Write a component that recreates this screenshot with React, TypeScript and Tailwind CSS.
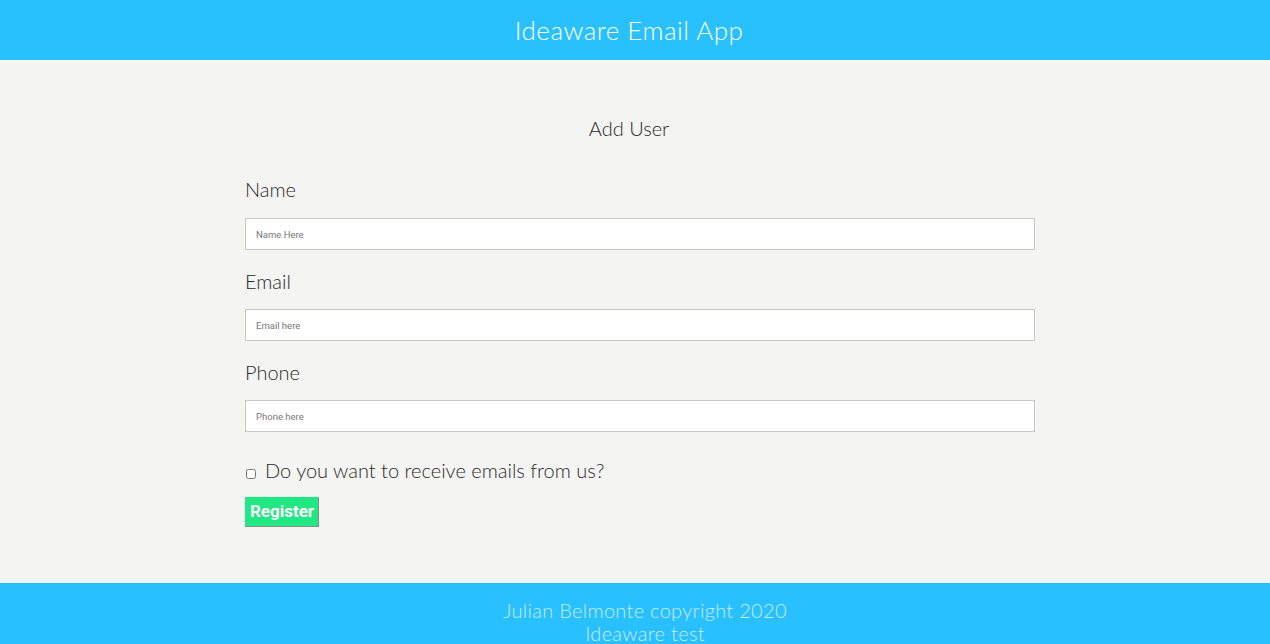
import React from "react";

const thin = { fontFamily: "Lato, 'Open Sans', sans-serif" };

function Field({ label, placeholder, first }: { label: string; placeholder: string; first?: boolean }) {
  return (
    <div className={first ? "" : "mt-[19px]"}>
      <label className="block h-6 leading-6 text-[20px] font-light text-[#2a2a2a]" style={thin}>
        {label}
      </label>
      <input
        type="text"
        placeholder={placeholder}
        className={`${first ? "mt-[17px]" : "mt-[16px]"} block w-full h-[32px] bg-white border border-[#c8c8c8] px-[10px] text-[9.5px] text-[#333] placeholder:text-[#777] outline-none`}
        style={{ fontFamily: "Roboto, 'Liberation Sans', sans-serif" }}
      />
    </div>
  );
}

export default function App() {
  return (
    <div className="min-h-screen bg-[#f4f4f2] flex flex-col">
      <header className="h-[60px] bg-[#29c1fd] flex items-center justify-center">
        <h1 className="text-[26px] font-light text-white tracking-[0.5px] pr-[12px]" style={thin}>
          Ideaware Email App
        </h1>
      </header>
      <main className="flex-1 pt-[56px] pb-[56px]">
        <h2 className="text-center h-6 leading-6 text-[20px] font-light text-[#2a2a2a] pr-[12px]" style={thin}>
          Add User
        </h2>
        <form className="ml-[245px] w-[790px] mt-[37px]" onSubmit={(e) => e.preventDefault()}>
          <Field label="Name" placeholder="Name Here" first />
          <Field label="Email" placeholder="Email here" />
          <Field label="Phone" placeholder="Phone here" />
          <div className="mt-[26px] flex items-center h-6">
            <input type="checkbox" className="w-[10px] h-[10px] ml-[1px] mt-[7px] m-0" />
            <span className="ml-[9px] text-[20px] font-light text-[#2a2a2a] leading-6" style={thin}>
              Do you want to receive emails from us?
            </span>
          </div>
          <button
            type="submit"
            className="mt-[15px] h-[30px] w-[74px] bg-[#20e882] text-white text-[17px] font-bold border border-[#20e882] border-r-[#8c8c8c] border-b-[#8c8c8c]"
            style={{ fontFamily: "Roboto, 'Liberation Sans', sans-serif" }}
          >
            Register
          </button>
        </form>
      </main>
      <footer className="bg-[#28c0fe] pt-[16px] pb-[4px] text-center text-white/75 text-[20px] font-light leading-[23px] tracking-[0.3px]" style={thin}>
        <div className="pl-[20px]">Julian Belmonte copyright 2020</div>
        <div className="pl-[20px]">Ideaware test</div>
      </footer>
    </div>
  );
}
